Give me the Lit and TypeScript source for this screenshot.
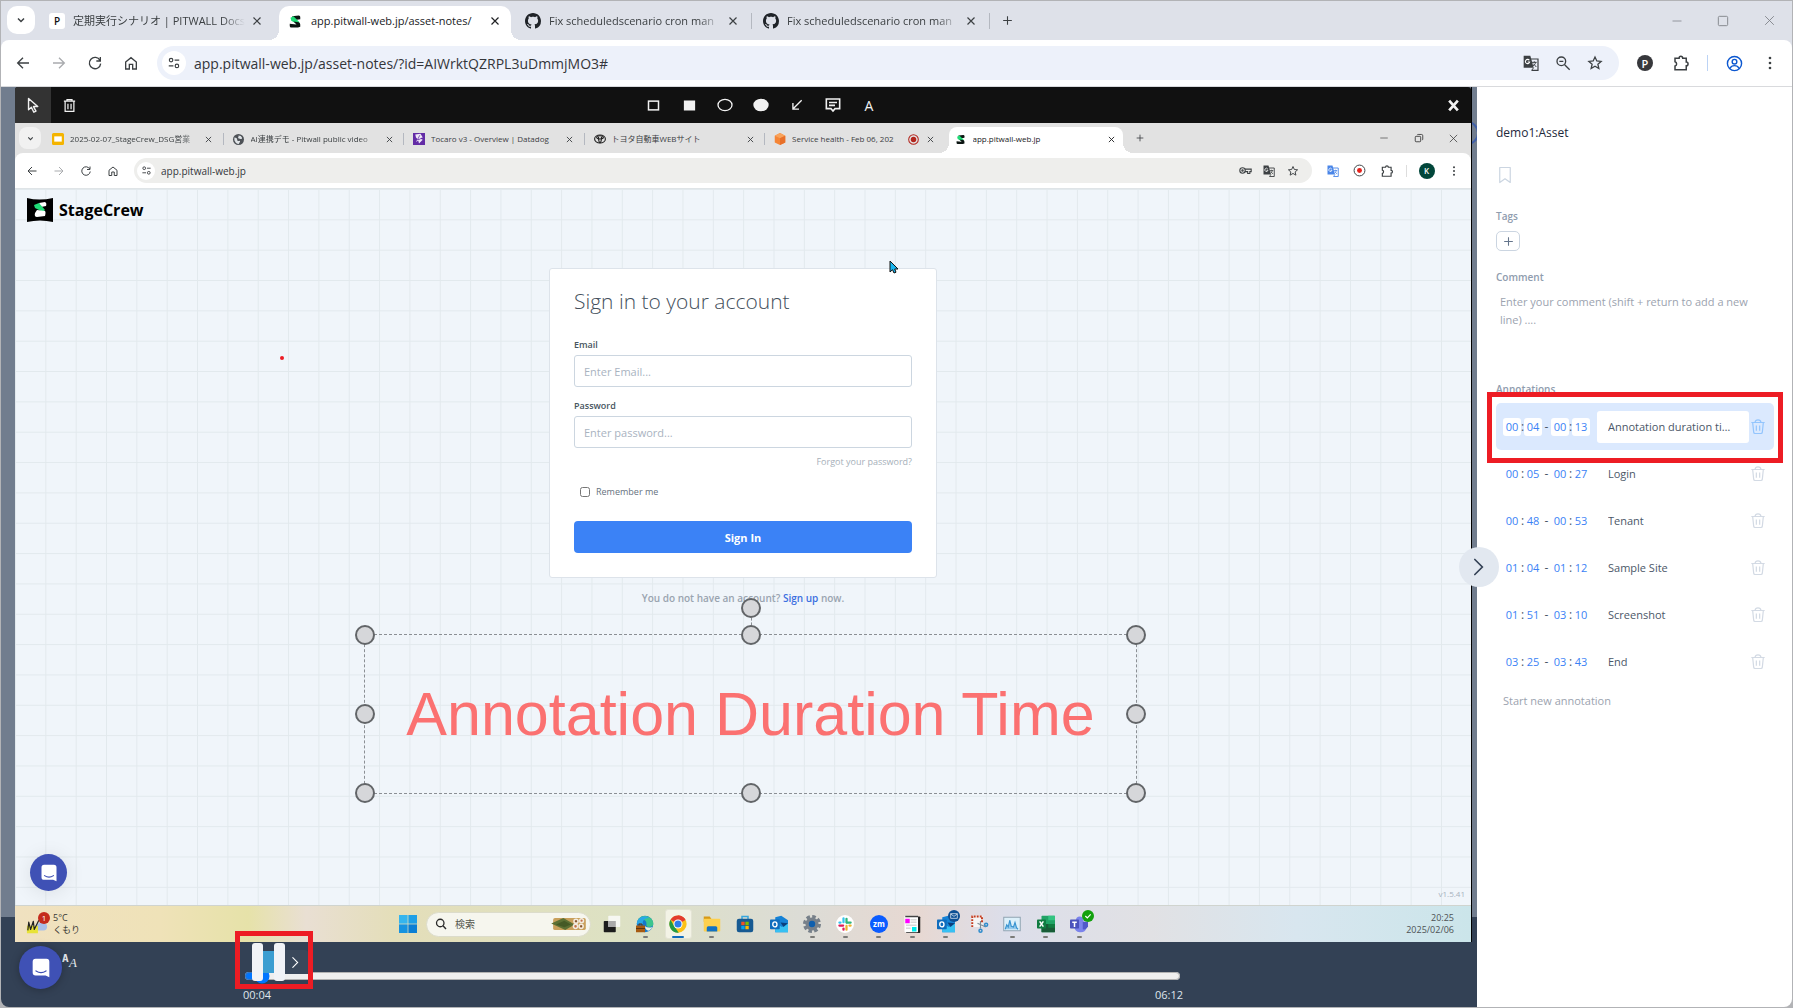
import { LitElement, html, svg, css, nothing, type TemplateResult, type SVGTemplateResult } from "lit";
import { customElement, property, state } from "lit/decorators.js";
import { classMap } from "lit/directives/class-map.js";

const icon = (size: number, body: SVGTemplateResult, box = "0 0 24 24", h = size) =>
  html`<svg width=${size} height=${h} viewBox=${box} fill="none" stroke="currentColor" stroke-width="2" aria-hidden="true">${body}</svg>`;

const g = {
  chevronDown: svg`<path d="M6 9l6 6 6-6" stroke-width="3"/>`,
  chevronRight: svg`<path d="M7 3l9 9-9 9" stroke-linecap="round"/>`,
  close: svg`<path d="M5 5l14 14M19 5L5 19" stroke-width="2.400"/>`,
  plus: svg`<path d="M12 4v16M4 12h16"/>`,
  back: svg`<path d="M21 12H4M12 4l-8 8 8 8"/>`,
  forward: svg`<path d="M3 12h17M12 4l8 8-8 8"/>`,
  reload: svg`<path d="M19.5 8A8.5 8.500 0 1 0 20.500 13M20 3v6h-6"/>`,
  home: svg`<path d="M4 10.500L12 4l8 6.500V21h-5.500v-7h-5v7H4z"/>`,
  tune: svg`<circle cx="7" cy="7" r="3"/><path d="M13 7h8M3 17h8"/><circle cx="17" cy="17" r="3"/>`,
  star: svg`<path d="M12 3l2.700 6 6.500.600-4.900 4.300 1.500 6.400L12 16.900l-5.800 3.400 1.500-6.400L2.800 9.600l6.500-.600z" stroke-width="1.900"/>`,
  puzzle: svg`<path d="M4 5.500h5.500a2.400 2.400 0 0 1 4.800 0H19v5.300a2.400 2.400 0 0 1 0 4.800V21H4v-5a2.900 2.900 0 0 0 0-5.600z"/>`,
  dots: svg`<g fill="currentColor" stroke="none"><circle cx="12" cy="4.500" r="2"/><circle cx="12" cy="12" r="2"/><circle cx="12" cy="19.500" r="2"/></g>`,
  translate: svg`<path d="M11 6h11.500v17H13" stroke-width="1.800"/><path d="M1 1h10l5 18H1z" fill="currentColor" stroke="none"/><path d="M9.500 8a3.200 3.200 0 1 0 .400 2.600H7" stroke="#fff" stroke-width="1.600"/><path d="M13.500 11h7M17 9.500V11M19 11c-.500 2.500-2 4-3.800 5.200M15.500 13l4.500 5M13 23l3-4" stroke-width="1.500"/>`,
  zoomOut: svg`<circle cx="9.500" cy="9.500" r="6.500"/><path d="M14.500 14.500L22 22M6.500 9.500h6"/>`,
  profile: svg`<circle cx="12" cy="12" r="10"/><circle cx="12" cy="9.500" r="3.300"/><path d="M5.500 19c1.500-3 4-4 6.500-4s5 1 6.500 4"/>`,
  key: svg`<circle cx="6.500" cy="12" r="5"/><circle cx="6.500" cy="12" r="1.300"/><path d="M11 9.500h11.500v4.500h-2.500v3.500h-4V14h-5"/>`,
  minus: svg`<path d="M3 12h18" stroke-width="1.500"/>`,
  maximize: svg`<rect x="4" y="4" width="16" height="16" rx="2" stroke-width="1.500"/>`,
  restore: svg`<rect x="3" y="8" width="13" height="13" rx="2"/><path d="M8 5q0-1.500 2-1.500h8q3 0 3 3V15q0 1.500-2 1.500"/>`,
  closeThin: svg`<path d="M4 4l16 16M20 4L4 20" stroke-width="1.600"/>`,
  pointer: svg`<path d="M5 2v16l4-3.500 3.500 7 3-1.500L12 13.500h6z" stroke-linejoin="round"/>`,
  trashSolid: svg`<path d="M3 5h18M8 4V2.500h8V4M5 5v16.500h14V5M9.500 9v9M14.500 9v9"/>`,
  rect: svg`<rect x="4" y="5" width="16" height="14" stroke-width="2.400"/>`,
  rectFill: svg`<rect x="3" y="4" width="18" height="16" fill="currentColor" stroke="none"/>`,
  circle: svg`<ellipse cx="12" cy="12" rx="10.500" ry="8.500"/>`,
  circleFill: svg`<ellipse cx="12" cy="12" rx="11.500" ry="9.500" fill="currentColor" stroke="none"/>`,
  arrow: svg`<path d="M20 4L5 19M5 8.500V19h10.500" stroke-width="2.300"/>`,
  comment: svg`<path d="M2 3h20v14.500h-7L12 21l-3-3.500H2zM6 8.200h12M6 12.500h9" stroke-width="2.400"/>`,
  trash: svg`<path d="M2 6h20M7.500 6q.500-4 4.500-4t4.500 4M4 6l1.500 14.500q.200 2 2 2h9q1.800 0 2-2L20 6M9.500 10.500v8M14.500 10.500v8" stroke-width="1.800"/>`,
  bookmark: svg`<path d="M5 2h14v20l-7-5-7 5z" stroke-width="1.600" stroke-linejoin="round"/>`,
  search: svg`<circle cx="10.500" cy="10" r="7.500" stroke-width="2.600"/><path d="M16 15.500l6 6.500" stroke-width="2.800"/>`,
  bubble: svg`<path d="M5.500 1h13Q22 1 22 4.500V23l-4.500-2h-12Q2 21 2 17.500v-13Q2 1 5.500 1z" fill="#fff" stroke="none"/><path d="M6 15.500q6 4 12 0" stroke="#3f51b5" stroke-width="1.500" stroke-linecap="round"/>`,
};

const github = svg`<path fill="#1f2328" stroke="none" d="M8 0C3.580 0 0 3.580 0 8c0 3.540 2.290 6.530 5.470 7.590.4.070.550-.170.550-.380 0-.190-.010-.820-.010-1.490-2.010.370-2.530-.490-2.690-.940-.090-.230-.480-.940-.820-1.130-.280-.150-.680-.520-.010-.530.630-.010 1.080.580 1.230.820.720 1.210 1.870.870 2.330.660.070-.520.280-.870.510-1.070-1.780-.2-3.640-.890-3.640-3.950 0-.870.310-1.590.820-2.150-.080-.2-.360-1.020.080-2.120 0 0 .670-.210 2.200.820.640-.180 1.320-.270 2-.270s1.360.090 2 .270c1.530-1.040 2.200-.820 2.200-.820.440 1.100.160 1.920.080 2.120.510.560.820 1.270.820 2.150 0 3.070-1.870 3.750-3.650 3.950.290.250.540.730.540 1.480 0 1.070-.010 1.930-.010 2.200 0 .210.150.460.550.380A8.010 8.010 0 0 0 16 8c0-4.420-3.580-8-8-8z"/>`;

const sMark = svg`<g stroke="none"><path d="M4 1l9-1q2 0 2 2v3L8 6z" fill="#0c1512"/><path d="M2 3l4-2 8 8-2 3-9-5z" fill="#1fdc76"/><path d="M6 8l7 1q2 1 2 3v3l-3 1H3q-2 0-2-2v-3l9 1z" fill="#0c1512"/></g>`;

const fav = {
  slides: svg`<rect width="16" height="16" rx="2" fill="#f4b400" stroke="none"/><rect x="3" y="4.500" width="10" height="7" fill="#fff" stroke="none"/>`,
  globe: svg`<circle cx="8" cy="8" r="8" fill="#4d5156" stroke="none"/><path d="M2 5q4 0 4 3t3 2-1 5q-5-2-6-6zM8 2q4 0 5 3t-3 2-2-3z" fill="#dfe3e6" stroke="none"/>`,
  datadog: svg`<rect width="16" height="16" fill="#632ca6" stroke="none"/><path d="M3 2l7-1 3 5-4 1 4 2-5 5-1-4-3 2 2-4-2-2z" fill="#efe7f8" stroke="none"/><path d="M9 3l-3 6 4-1" stroke="#632ca6" stroke-width="1"/>`,
  toyota: svg`<g stroke="#222" stroke-width="1.500"><ellipse cx="8" cy="8" rx="7.200" ry="5.400"/><ellipse cx="8" cy="5.800" rx="4.500" ry="2.200"/><path d="M6 5q0 7 2 8 2-1 2-8"/></g>`,
  cube: svg`<g stroke="none"><path d="M8 0l7 3.500v9L8 16l-7-3.500v-9z" fill="#f58536"/><path d="M8 0l7 3.500L8 7 1 3.500z" fill="#f9a35b"/><path d="M8 7l7-3.500v9L8 16z" fill="#e8702a"/></g>`,
  record: svg`<circle cx="8" cy="8" r="7" stroke="#b3261e" stroke-width="1.500"/><circle cx="8" cy="8" r="4" fill="#b3261e" stroke="none"/>`,
};

const app = {
  windows: svg`<g stroke="none" fill="#1490df"><path d="M0 0h11.500v11.500H0z" fill="#35b5ee"/><path d="M12.500 0H24v11.500H12.500z" fill="#1e9fe6"/><path d="M0 12.500h11.500V24H0z" fill="#1793e0"/><path d="M12.500 12.500H24V24H12.500z" fill="#0b7ed4"/></g>`,
  task: svg`<g stroke="none"><rect x="1" y="8" width="16" height="15" rx="1" fill="#1c1c1c"/><rect x="7" y="1" width="16" height="15" rx="1" fill="#fafafa" opacity=".85"/><rect x="7" y="8" width="10" height="8" fill="#a9a9a9"/></g>`,
  edge: svg`<g stroke="none"><circle cx="12" cy="12" r="11" fill="#1577c9"/><path d="M2 8C5-1 20-1 23 10q1 6-6 6-4 0-3-4 0-6-6-6-4 0-6 2z" fill="#3cc58d"/><path d="M1 12C2 2 13 0 17 4q-9 0-8 9-5-3-8-1z" fill="#28a7e8"/><path d="M17 21q-5-1-5-6 4 3 10 1-2 4-5 5z" fill="#e9f0e0"/><rect x="0" y="14" width="12" height="9" fill="#a65a12"/><path d="M4 14v-2h4v2M0 18h12" stroke="#5f3209" stroke-width="1.300" fill="none"/></g>`,
  chrome: svg`<g stroke="none"><circle cx="12" cy="12" r="11.500" fill="#fbc116"/><path d="M12 12L2 6.300A11.500 11.500 0 0 1 22 6.500z" fill="#e33b2e"/><path d="M12 .500A11.500 11.500 0 0 1 22 6.500H12z" fill="#e33b2e"/><path d="M2 6.300l5.200 9 5.800 8.200A11.500 11.500 0 0 1 2 6.300z" fill="#229a45"/><circle cx="12" cy="12" r="6" fill="#fff"/><circle cx="12" cy="12" r="4.700" fill="#2f7de9"/></g>`,
  folder: svg`<g stroke="none"><path d="M1 2h8l2 3v4H1z" fill="#d79a17"/><rect x="1" y="5" width="22" height="17" rx="1" fill="#fdd04e"/><path d="M5 17q0-2 2-2h10q2 0 2 2v5H5z" fill="#1172c4"/></g>`,
  store: svg`<path d="M8 6V2h8v4" stroke="#36a6de" stroke-width="2"/><g stroke="none"><rect x="1" y="5" width="22" height="18" rx="3" fill="#175a92"/><path d="M7 9h4.500v4.500H7z" fill="#f25022"/><path d="M12.500 9H17v4.500h-4.500z" fill="#7fba00"/><path d="M7 14.500h4.500V19H7z" fill="#00a4ef"/><path d="M12.500 14.500H17V19h-4.500z" fill="#ffb900"/></g>`,
  outlook: svg`<g stroke="none"><path d="M7 3l8-2 9 6v16H7z" fill="#1582d6"/><path d="M7 11l9 5 8-5v12H7z" fill="#37c0f2"/><path d="M14 10l10 1-6 5z" fill="#0b3f7d"/><rect x="0" y="6" width="13" height="13" rx="1" fill="#0f6cbd"/></g><ellipse cx="6.500" cy="12.500" rx="2.800" ry="3.300" stroke="#fff" stroke-width="1.800"/>`,
  gear: svg`<circle cx="12" cy="12" r="10" stroke="#77808a" stroke-width="4" stroke-dasharray="4.800 3.050"/><circle cx="12" cy="12" r="6.500" fill="#0f5fae" stroke="#77808a" stroke-width="4.500"/>`,
  slack: svg`<circle cx="12" cy="12" r="12" fill="#fff" stroke="none"/><g stroke-width="3" stroke-linecap="round"><path d="M10 4.500v5" stroke="#36c5f0"/><path d="M4.500 10H6" stroke="#36c5f0"/><path d="M14.500 10h5" stroke="#2eb67d"/><path d="M14 5v5" stroke="#2eb67d"/><path d="M14 14.500v5" stroke="#ecb22e"/><path d="M18 14h1.500" stroke="#ecb22e"/><path d="M4.500 14h5" stroke="#e01e5a"/><path d="M10 18v1.500" stroke="#e01e5a"/></g>`,
  zoom: svg`<circle cx="12" cy="12" r="12" fill="#0b5cff" stroke="none"/>`,
  note: svg`<g stroke="none"><rect x="4" y="2" width="19" height="22" rx="1" fill="#222"/><rect x="2" y="1" width="18" height="22" rx="1" fill="#fff"/><path d="M3 1h17v2H3z" fill="#444"/><path d="M3 5h6v6H3z" fill="#f0f"/><path d="M12 16h6v6h-6z" fill="#0ee"/><path d="M10 6h8v1h-8zM10 9h8v1h-8zM4 13h14v1H4zM4 17h6v1H4z" fill="#b5b5b5"/></g>`,
  snip: svg`<rect x="2" y="1" width="15" height="15" fill="#f5f5f5" stroke="none"/><path d="M3 16V2h13v8" stroke="#c43b1e" stroke-width="2.600" stroke-dasharray="2.500 1.500"/><path d="M10 11l11 5M14 8v10" stroke="#7f8c96" stroke-width="1.600"/><circle cx="14" cy="21" r="2" stroke="#2f8ccc"/><circle cx="21.500" cy="13" r="2" stroke="#2f8ccc"/>`,
  chart: svg`<rect x="1" y="3" width="22" height="18" fill="#dcf0fa" stroke="#8fa3b1" stroke-width="1.300"/><path d="M3 19l2-6 2 3 2-9 2 8 3 1 2-6 2 7 2 2" stroke="#3793d0" stroke-width="1.500" fill="#93c9ec"/>`,
  excel: svg`<g stroke="none"><rect x="6" y="1" width="18" height="22" rx="1" fill="#21a366"/><path d="M15 1h9v6h-9z" fill="#33c481"/><path d="M6 12h18v11H6z" fill="#185c37"/><path d="M15 12h9v5h-9z" fill="#107c41"/><rect x="0" y="6" width="12" height="12" rx="1" fill="#107c41"/></g><path d="M3.500 8.500l5 7M8.500 8.500l-5 7" stroke="#fff"/>`,
  teams: svg`<g stroke="none"><circle cx="13" cy="7" r="5" fill="#7b83eb"/><path d="M6 9h16v8q-2 7-9 6t-7-7z" fill="#7b83eb"/><path d="M17 9h7v6q-2 5-7 4z" fill="#5059c9"/><rect x="0" y="6" width="12" height="12" rx="1" fill="#4b53bc"/></g><path d="M3 9.500h6M6 9.500V16" stroke="#fff"/>`,
  sushi: svg`<g stroke="none"><rect x="2" y="1" width="35" height="13" rx="2" fill="#c9a05c"/><path d="M0 7L13 1l12 7-10 6z" fill="#5c7034"/><path d="M5 8l9-4 7 4-7 3z" fill="#455a26"/></g><g fill="#c4704a" stroke="#f2ece0" stroke-width="1.600"><circle cx="26.500" cy="4.500" r="2.200"/><circle cx="32.500" cy="4" r="2"/><circle cx="26" cy="10" r="2.200"/><circle cx="32" cy="10" r="2.200"/></g><g fill="#46562c" stroke="none"><circle cx="26.500" cy="4.500" r=".800"/><circle cx="32" cy="10" r=".800"/></g>`,
  weather: svg`<g stroke="none"><path d="M10 17q-3-5 3-7 3-4 6-1 4 0 4 4 0 4-4 4z" fill="#a9bfe8"/><path d="M1 12h12v8H1z" fill="#e8e337"/></g><path d="M2 17l1-9 2 8 3-9 1 9 5-10" stroke="#222" stroke-width="1.300" stroke-linejoin="round"/>`,
};

interface TabInfo { label: string; mark: TemplateResult; active?: boolean; rec?: boolean; ruled?: boolean; faded?: boolean; }

const sharedText = css`
  :host { box-sizing: border-box; }
  *, *::before, *::after { box-sizing: border-box; }
  button, input, textarea { font: inherit; color: inherit; margin: 0; padding: 0; border: 0; background: none; }
  button { display: flex; align-items: center; justify-content: center; }
  svg { display: block; flex: none; overflow: visible; }
`;

/** Tab strip and address row of a browser window. `compact` is the smaller, recorded window. */
@customElement("browser-chrome")
export class BrowserChrome extends LitElement {
  @property({ type: Boolean, reflect: true }) compact = false;
  @property() url = "";
  @property({ attribute: false }) tabs: TabInfo[] = [];

  static styles = [sharedText, css`
    :host {
      display: block;
      --strip: #dee1e9; --field: #edf1fa; --strip-h: 39px; --row-h: 46px; --field-h: 34px;
      --tabs-w: 952px; --tab-pad: 11px; --tab-gap: 8px; --fav: 16px; --lead: 37px; --nav: 36px; --btn: 28px;
      --tab-font: 11px; --url-font: 14px; --end: 36px; --inner-btn: 32px; --win: 46px; --site: 24px; --tab-top: 5px; --close: 16px; --r: 10px;
      color: #3c4043;
    }
    :host([compact]) {
      --strip: #e2e2e2; --field: #eeeeec; --strip-h: 30px; --row-h: 35px; --field-h: 25px;
      --tabs-w: 1083px; --tab-pad: 9px; --tab-gap: 6px; --fav: 12px; --lead: 28px; --nav: 27px; --btn: 22px;
      --tab-font: 8px; --url-font: 10px; --end: 27px; --inner-btn: 24px; --win: 35px; --site: 18px; --tab-top: 4px; --close: 12px; --r: 8px;
    }
    .strip { display: flex; height: var(--strip-h); background: var(--strip); padding-top: var(--tab-top); }
    .lead { width: var(--lead); display: flex; justify-content: flex-end; padding-right: 3px; }
    :host([compact]) .lead { padding-right: 2px; }
    .menu { width: var(--btn); height: var(--btn); border-radius: var(--r); background: #fff; }
    :host([compact]) .menu { background: #f1f1f1; }
    .tabs { display: grid; grid-auto-flow: column; grid-auto-columns: minmax(0, 1fr); flex: 0 1 var(--tabs-w); }
    .tab { position: relative; display: flex; align-items: center; gap: var(--tab-gap); padding: 0 var(--tab-pad) 4px; min-width: 0; }
    :host([compact]) .tab { padding-bottom: 2px; }
    .tab.active { background: #fff; border-radius: var(--r) var(--r) 0 0; margin: 0 3px; padding-left: calc(var(--tab-pad) - 3px); padding-right: calc(var(--tab-pad) - 3px); color: #202124; }
    .tab.active::before, .tab.active::after { content: ""; position: absolute; bottom: 0; width: 10px; height: 10px; }
    .tab.active::before { right: 100%; background: radial-gradient(circle at 0 0, transparent 10px, #fff 10px); }
    .tab.active::after { left: 100%; background: radial-gradient(circle at 100% 0, transparent 10px, #fff 10px); }
    .tab.ruled::after { content: ""; position: absolute; right: 0; top: 7px; width: 1px; height: 16px; background: #b4b8c0; }
    :host([compact]) .tab.ruled::after { top: 6px; height: 12px; }
    .mark { width: var(--fav); display: flex; justify-content: center; }
    .label { flex: 1; min-width: 0; overflow: hidden; white-space: nowrap; font-size: var(--tab-font); line-height: 16px; }
    .label.faded { margin-right: -6px; mask-image: linear-gradient(to right, #000 calc(100% - 24px), transparent calc(100% - 2px)); }
    .shut { width: var(--close); height: var(--close); }
    .add { width: calc(var(--btn) + 6px); height: var(--btn); }
    .window { display: flex; margin-left: auto; color: #7c7f85; margin-top: calc(0px - var(--tab-top)); }
    :host([compact]) .window { color: #333; }
    .window button { width: var(--win); height: var(--strip-h); }
    .row { display: flex; height: var(--row-h); background: var(--strip); }
    .row-in { display: flex; flex: 1; align-items: center; background: #fff; border-radius: 8px 8px 0 0; padding: 0 4px; }
    :host([compact]) .row-in { padding-left: 3px; }
    .nav, .tools { display: flex; align-items: center; }
    .nav { margin-right: 8px; }
    .nav button { width: var(--nav); height: var(--field-h); }
    .dim { color: #a9abae; }
    .field { flex: 1; display: flex; align-items: center; height: var(--field-h); border-radius: 17px; background: var(--field); padding: 0 8px 0 5px; }
    :host([compact]) .field { padding: 0 7px 0 3px; }
    .field button { width: var(--inner-btn); height: var(--site); }
    .field .site { width: var(--site); border-radius: 50%; background: #fff; }
    .field input { flex: 1; min-width: 0; font-size: var(--url-font); padding-left: 8px; outline: none; color: #34363a; }
    :host([compact]) .field input { padding-left: 6px; }
    .tools { padding-left: 8px; }
    :host([compact]) .tools { padding-left: 7px; }
    .tools button { width: var(--end); height: var(--btn); }
    .rule { width: 1px; height: 16px; margin: 0 8px; background: #bcd3f5; }
    :host([compact]) .rule { margin: 0 6px; height: 12px; background: #ddd; }
    .letter, .pbadge, .kbadge { display: grid; place-items: center; width: 16px; height: 16px; line-height: 1; font-weight: 600; }
    .letter { border-radius: 3px; background: #fff; color: #111; font-size: 10px; }
    .pbadge, .kbadge { border-radius: 50%; color: #fff; }
    .pbadge { background: #37383c; font-size: 11px; }
    .kbadge { background: #01463a; font-size: 8px; }
    .blue { color: #0b57d0; }
    .gblue { color: #4a86e8; }
  `];

  render() {
    const c = this.compact;
    const s = c ? 12 : 16;
    return html`
      <div class="strip">
        <div class="lead"><button class="menu" aria-label="Search tabs">${icon(c ? 9 : 12, g.chevronDown)}</button></div>
        <div class="tabs" role="tablist">
          ${this.tabs.map((t) => html`
            <div class=${classMap({ tab: true, active: !!t.active, ruled: !!t.ruled })} role="tab" aria-selected=${t.active ? "true" : "false"}>
              <span class="mark">${t.mark}</span>
              <span class=${classMap({ label: true, faded: !!t.faded })}>${t.label}</span>
              ${t.rec ? icon(11, fav.record, "0 0 16 16") : nothing}
              <button class="shut" aria-label="Close tab">${icon(c ? 9 : 12, g.close)}</button>
            </div>`)}
        </div>
        <button class="add" aria-label="New tab">${icon(c ? 10 : 13, g.plus)}</button>
        <div class="window">
          <button aria-label="Minimize">${icon(c ? 10 : 12, g.minus)}</button>
          <button aria-label="Maximize">${icon(c ? 10 : 14, c ? g.restore : g.maximize)}</button>
          <button aria-label="Close window">${icon(c ? 11 : 13, g.closeThin)}</button>
        </div>
      </div>
      <div class="row"><div class="row-in">
        <div class="nav">
          <button aria-label="Back">${icon(s, g.back)}</button>
          <button aria-label="Forward" class="dim">${icon(s, g.forward)}</button>
          <button aria-label="Reload">${icon(s, g.reload)}</button>
          <button aria-label="Home">${icon(s, g.home)}</button>
        </div>
        <div class="field">
          <button class="site" aria-label="Site information">${icon(c ? 11 : 14, g.tune)}</button>
          <input type="text" aria-label="Address" .value=${this.url} />
          ${c ? html`<button aria-label="Passwords">${icon(13, g.key)}</button>` : nothing}
          <button aria-label="Translate">${icon(s, g.translate)}</button>
          ${c ? nothing : html`<button aria-label="Zoom">${icon(16, g.zoomOut)}</button>`}
          <button aria-label="Bookmark">${icon(s, g.star)}</button>
        </div>
        <div class="tools">
          ${c
            ? html`<button class="gblue" aria-label="Translator">${icon(12, g.translate)}</button>
                <button aria-label="Recorder">${icon(13, svg`<circle cx="12" cy="12" r="10" stroke-width="1.800"/><circle cx="12" cy="12" r="4.500" fill="#e5221c" stroke="none"/>`)}</button>`
            : html`<button aria-label="PITWALL"><span class="pbadge">P</span></button>`}
          <button aria-label="Extensions">${icon(c ? 14 : 18, g.puzzle)}</button>
          <span class="rule"></span>
          <button class="blue" aria-label="Profile">${c ? html`<span class="kbadge">K</span>` : icon(17, g.profile)}</button>
          <button aria-label="Menu">${icon(c ? 12 : 16, g.dots)}</button>
        </div>
      </div></div>
    `;
  }
}

/** White square with one letter, used where a site has no drawn icon. */
@customElement("letter-mark")
export class LetterMark extends LitElement {
  @property() letter = "";
  static styles = css`
    :host { display: grid; place-items: center; width: 16px; height: 16px; border-radius: 3px; background: #fff; color: #111; font-size: 10px; line-height: 1; font-weight: 600; }
  `;
  render() { return html`${this.letter}`; }
}

interface Note { from: [string, string]; to: [string, string]; title: string; selected?: boolean; }

@customElement("asset-panel")
export class AssetPanel extends LitElement {
  @state() private notes: Note[] = [
    { from: ["00", "04"], to: ["00", "13"], title: "Annotation duration time", selected: true },
    { from: ["00", "05"], to: ["00", "27"], title: "Login" },
    { from: ["00", "48"], to: ["00", "53"], title: "Tenant" },
    { from: ["01", "04"], to: ["01", "12"], title: "Sample Site" },
    { from: ["01", "51"], to: ["03", "10"], title: "Screenshot" },
    { from: ["03", "25"], to: ["03", "43"], title: "End" },
  ];

  static styles = [sharedText, css`
    :host { display: block; position: relative; background: #fff; padding: 36px 18px 0 19px; color: #4b5768; font-size: 12px; }
    h1 { margin: 0; font-size: 12px; line-height: 20px; font-weight: 500; color: #1e293b; }
    .mark { width: 18px; height: 20px; margin-top: 22px; color: #cbd5e1; }
    .caption { display: block; font-size: 10px; line-height: 16px; color: #8f9cae; font-weight: 600; }
    .tags { margin-top: 23px; }
    .plus { width: 24px; height: 20px; margin-top: 7px; border: 1px solid #cbd5e1; border-radius: 5px; color: #64748b; }
    .comment { margin-top: 18px; }
    textarea { display: block; width: 100%; height: 72px; margin-top: 8px; padding: 0 4px; resize: none; overflow: hidden; outline: none; font-size: 11px; line-height: 18px; }
    textarea::placeholder { color: #9ca3af; opacity: 1; }
    .notes-title { margin-top: 16px; }
    ul { list-style: none; margin: 6px 0 0; padding: 0; }
    li { position: relative; display: flex; align-items: center; height: 47px; border-radius: 5px; padding: 0 7px; }
    li.selected { background: #dbe9fe; }
    .part { width: 18px; height: 18px; border-radius: 3px; text-align: center; color: #3b82f6; font-size: 11px; outline: none; }
    .sep { width: 3px; display: flex; justify-content: center; }
    .dash { width: 9px; text-align: center; }
    .name { flex: 1; min-width: 0; height: 32px; margin-left: 7px; padding: 0 11px; border-radius: 3px; text-overflow: ellipsis; outline: none; font-size: 11px; }
    .selected .part, .selected .name { background: #fff; }
    .bin { width: 18px; height: 24px; color: #d3dae4; }
    .selected .bin { color: #93c5fd; }
    .frame { position: absolute; inset: -11px -9px -13px; border: 5px solid #ed1c24; pointer-events: none; z-index: 1; }
    .start { margin: 6px 0 0 7px; font-size: 11px; line-height: 20px; color: #9ca3af; }
    .fold { position: absolute; left: -18px; top: 460px; width: 40px; height: 40px; border-radius: 50%; background: #e2e8f0; color: #334155; }
  `];

  render() {
    return html`
      <h1>demo1:Asset</h1>
      <button class="mark" aria-label="Bookmark">${icon(18, g.bookmark)}</button>
      <span class="caption tags">Tags</span>
      <button class="plus" aria-label="Add tag">${icon(13, g.plus)}</button>
      <label class="caption comment" for="comment">Comment</label>
      <textarea id="comment" placeholder="Enter your comment (shift + return to add a new line) ...."></textarea>
      <span class="caption notes-title">Annotations</span>
      <ul>
        ${this.notes.map((n) => html`
          <li class=${classMap({ selected: !!n.selected })}>
            <input class="part" aria-label="Start minutes" .value=${n.from[0]} /><span class="sep">:</span>
            <input class="part" aria-label="Start seconds" .value=${n.from[1]} /><span class="dash">-</span>
            <input class="part" aria-label="End minutes" .value=${n.to[0]} /><span class="sep">:</span>
            <input class="part" aria-label="End seconds" .value=${n.to[1]} />
            <input class="name" aria-label="Annotation title" .value=${n.title} />
            <button class="bin" aria-label="Delete annotation">${icon(16, g.trash, "0 0 24 24", 17)}</button>
            ${n.selected ? html`<span class="frame"></span>` : nothing}
          </li>`)}
      </ul>
      <button class="start">Start new annotation</button>
      <button class="fold" aria-label="Collapse panel">${icon(20, g.chevronRight)}</button>
    `;
  }
}

@customElement("sign-in-page")
export class SignInPage extends LitElement {
  static styles = [sharedText, css`
    :host { display: flex; flex-direction: column; align-items: center; position: relative; background: #f0f5fa; overflow: hidden; }
    .grid { position: absolute; inset: 0; width: 100%; height: 100%; }
    .brand { position: relative; align-self: flex-start; display: flex; align-items: center; gap: 6px; margin: 9px 0 0 12px; height: 24px; }
    .brand span { font-size: 16px; font-weight: 700; color: #000; }
    form { position: relative; width: 388px; margin-top: 46px; padding: 20px 24px 24px; background: #fff; border: 1px solid #dde3ea; border-radius: 3px; color: #475560; }
    h2 { margin: 0; font-size: 21px; line-height: 24px; font-weight: 300; color: #44505c; }
    .text { display: block; font-size: 9px; line-height: 14px; font-weight: 600; margin-bottom: 3px; }
    .box { display: block; width: 100%; height: 32px; border: 1px solid #ccd6e0; border-radius: 3px; padding: 0 9px; font-size: 11px; outline: none; }
    .box::placeholder { color: #a9b3bf; opacity: 1; }
    .email { margin-top: 25px; }
    .password { margin-top: 12px; }
    .forgot { display: block; text-align: right; margin-top: 6px; font-size: 9px; line-height: 16px; color: #a6afb9; text-decoration: none; }
    .remember { display: flex; align-items: center; gap: 6px; margin: 14px 0 0 6px; font-size: 9px; line-height: 16px; color: #66727e; }
    .remember input { width: 10px; height: 10px; }
    .go { width: 100%; height: 32px; margin-top: 21px; border-radius: 4px; background: #3b82f6; color: #fff; font-size: 11px; font-weight: 700; }
    p { position: relative; margin: 12px 0 0; font-size: 10px; line-height: 16px; font-weight: 600; color: #9aa4b0; }
    p a { color: #3b6fe0; text-decoration: none; }
    .version { position: absolute; right: 6px; bottom: 4px; font-size: 8px; line-height: 14px; color: #a7b1be; }
    .help { position: absolute; left: 15px; bottom: 14px; width: 37px; height: 37px; border-radius: 50%; background: #3f51b5; box-shadow: 0 2px 20px #00000018; }
    .dot { position: absolute; left: 265px; top: 167px; width: 4px; height: 4px; border-radius: 50%; background: #ed1c24; }
    .mouse { position: absolute; left: 874px; top: 71px; }
    .pick { position: absolute; left: 349px; top: 445px; width: 773px; height: 160px; display: grid; place-items: center; border: 1px dashed #8b8f94; font: 61px/72px "Liberation Sans", Arial, sans-serif; color: #fb7171; white-space: nowrap; }
    .stem { position: absolute; left: 50%; top: -27px; height: 27px; border-left: 1px dashed #8b8f94; }
    .h { position: absolute; width: 20px; height: 20px; margin: -10px; border-radius: 50%; border: 2px solid #626568; background: #d6d7da; }
    .l { left: 0; } .c { left: 50%; } .r { left: 100%; }
    .t { top: 0; } .m { top: 50%; } .b { top: 100%; } .u { top: -27px; }
  `];

  render() {
    return html`
      <svg class="grid" aria-hidden="true">
        <defs><pattern id="cells" width="30.340" height="30.340" patternUnits="userSpaceOnUse"><path d="M.500 30.340V.500H30.340" fill="none" stroke="#e2e9ed" stroke-width="1"/></pattern></defs>
        <rect width="100%" height="100%" fill="url(#cells)"/>
      </svg>
      <div class="brand">
        ${icon(26, svg`<path d="M0 0q12 3 26 0v24q-13-3-26 0z" fill="#000" stroke="none"/><g stroke="none"><path d="M12 5l6-1q2 1 1 4l-5 1z" fill="#fff"/><path d="M7 7l5-2 6 7-2 2-8-4z" fill="#1fdc76"/><path d="M10 12l8 1q1 1 0 5l-8 1q-3 0-2-4z" fill="#fff"/></g>`, "0 0 26 24", 24)}
        <span>StageCrew</span>
      </div>
      <form @submit=${(e: Event) => e.preventDefault()}>
        <h2>Sign in to your account</h2>
        <label class="text email" for="email">Email</label>
        <input class="box" id="email" type="email" placeholder="Enter Email..." />
        <label class="text password" for="password">Password</label>
        <input class="box" id="password" type="password" placeholder="Enter password..." />
        <a class="forgot" href="#forgot">Forgot your password?</a>
        <label class="remember"><input type="checkbox" />Remember me</label>
        <button class="go">Sign In</button>
      </form>
      <p>You do not have an account? <a href="#signup">Sign up</a> now.</p>
      <span class="version">v1.5.41</span>
      <button class="help" aria-label="Open chat">${icon(18, g.bubble)}</button>
      <span class="dot"></span>
      <svg class="mouse" width="10" height="14" viewBox="0 0 10 14" aria-hidden="true"><path d="M1 1v11l2.500-2.300L5 13l2-.800L5.700 9H9z" fill="#18b6f0" stroke="#111" stroke-width="1"/></svg>
      <div class="pick">Annotation Duration Time
        <span class="stem"></span>
        ${["l t", "c t", "r t", "l m", "r m", "l b", "c b", "r b", "c u"].map((p) => html`<span class="h ${p}"></span>`)}
      </div>
    `;
  }
}

@customElement("task-bar")
export class TaskBar extends LitElement {
  static styles = [sharedText, css`
    :host { display: grid; grid-template-columns: 1fr auto 1fr; align-items: center; height: 37px; border-top: 1px solid #d0d4cf;
      background: linear-gradient(to right, #f0e1c0 0, #efe2b8 10%, #e6e2a9 16%, #e9dfd3 20%, #e4deb9 26%, #dde1c3 41%, #dcdcd6 54%, #e7d8d2 62%, #dcdeea 68%, #e1e1e4 78%, #d8e6ef 88%, #cbe5ea 100%); }
    .weather { position: relative; display: flex; align-items: center; gap: 5px; padding-left: 11px; font-size: 9px; line-height: 12px; color: #3b3a35; text-align: left; justify-self: start; }
    .count { position: absolute; left: 23px; top: 0; width: 12px; height: 12px; border-radius: 50%; background: #c42b1c; color: #fff; font-size: 8px; text-align: center; line-height: 12px; }
    .mid { display: flex; align-items: center; height: 36px; }
    .start { width: 36px; height: 36px; }
    .find { display: flex; align-items: center; width: 165px; height: 25px; border-radius: 13px; background: #f6f6ee; border: 1px solid #dcdccb; padding: 0 3px 0 8px; gap: 8px; color: #2b2b2b; }
    .find input { flex: 1; min-width: 0; font-size: 10px; outline: none; }
    .find input::placeholder { color: #55564f; opacity: 1; }
    .apps { display: grid; grid-template-columns: repeat(15, 1fr); width: 501px; height: 36px; margin-left: 4px; }
    .apps button { position: relative; height: 36px; }
    .apps button.on::before { content: ""; position: absolute; inset: 3px 3px; border-radius: 3px; background: #f3f3e6; border: 1px solid #e4e4d5; }
    .apps svg { position: relative; }
    .run::after { content: ""; position: absolute; bottom: 4px; width: 5px; height: 2px; border-radius: 1px; background: #7b7b78; }
    .on.run::after { width: 12px; background: #0f6cbd; }
    .zm { position: absolute; color: #fff; font-size: 8px; font-weight: 700; line-height: 10px; }
    .badge { position: absolute; right: 2px; top: 4px; width: 12px; height: 12px; border-radius: 50%; display: grid; place-items: center; color: #fff; background: #0d4f94; }
    .badge.ok { background: #13a10e; }
    .clock { justify-self: end; text-align: right; padding-right: 17px; font-size: 9px; line-height: 12px; color: #4d5254; }
  `];

  private apps: { name: string; art: SVGTemplateResult; run?: boolean; on?: boolean; extra?: TemplateResult }[] = [
    { name: "Task view", art: app.task },
    { name: "Edge", art: app.edge, run: true },
    { name: "Chrome", art: app.chrome, run: true, on: true },
    { name: "Explorer", art: app.folder, run: true },
    { name: "Store", art: app.store },
    { name: "Outlook", art: app.outlook },
    { name: "Settings", art: app.gear, run: true },
    { name: "Slack", art: app.slack, run: true },
    { name: "Zoom", art: app.zoom, run: true, extra: html`<span class="zm">zm</span>` },
    { name: "Notes", art: app.note, run: true },
    { name: "Mail", art: app.outlook, run: true, extra: html`<span class="badge">${icon(8, svg`<path d="M2 5h20v14H2zM2 6l10 7 10-7"/>`)}</span>` },
    { name: "Snipping Tool", art: app.snip },
    { name: "Monitor", art: app.chart, run: true },
    { name: "Excel", art: app.excel, run: true },
    { name: "Teams", art: app.teams, run: true, extra: html`<span class="badge ok">${icon(8, svg`<path d="M4 12l6 6L20 7" stroke-width="3.500"/>`)}</span>` },
  ];

  render() {
    return html`
      <button class="weather">${icon(22, app.weather, "0 0 24 20", 20)}<span class="count">1</span><span>5°C<br />くもり</span></button>
      <div class="mid">
        <button class="start" aria-label="Start">${icon(18, app.windows)}</button>
        <label class="find">${icon(12, g.search)}<input type="text" aria-label="検索" placeholder="検索" />${icon(36, app.sushi, "0 0 38 15", 14)}</label>
        <div class="apps">
          ${this.apps.map((a) => html`<button class=${classMap({ run: !!a.run, on: !!a.on })} aria-label=${a.name}>${icon(18, a.art)}${a.extra ?? nothing}</button>`)}
        </div>
      </div>
      <div class="clock">20:25<br />2025/02/06</div>
    `;
  }
}

@customElement("app-root")
export class AppRoot extends LitElement {
  @state() private position = 4;
  private readonly duration = 372;

  static styles = [sharedText, css`
    :host { display: flex; flex-direction: column; min-height: 100vh; padding: 1px; background: #b2b3b6; overflow: hidden; font-family: "Open Sans", "Noto Sans", "Noto Sans CJK JP", sans-serif; }
    .work { flex: 1; display: flex; border-top: 1px solid #d9dadd; border-radius: 0 0 8px 8px; overflow: hidden; }
    .main { position: relative; flex: 1; min-width: 0; display: flex; flex-direction: column; background: linear-gradient(to top, #334155 90px, #717d8e 90px); }
    .video { flex: 1; display: flex; flex-direction: column; margin: 0 5px 0 14px; border-right: 1px solid #000; }
    sign-in-page { flex: 1; border-top: 1px solid #dfe4e7; }
    .draw { display: flex; height: 36px; background: #111; color: #f1f1f1; border-radius: 3px 3px 0 0; }
    .draw button { width: 36px; height: 36px; }
    .draw .on { background: #333; border-top-left-radius: 3px; }
    .shapes { flex: 1; display: flex; justify-content: center; }
    .letter { font-size: 14px; }
    .ring { position: absolute; right: 0; top: 34px; width: 5px; height: 24px; overflow: hidden; }
    .ring::before { content: ""; position: absolute; right: -2px; top: 0; width: 24px; height: 24px; border: 2px solid #4160a8; border-radius: 50%; }
    .player { position: relative; height: 65px; padding: 26px 296px 0 243px; color: #dfe5ec; font-size: 11px; }
    .player input { display: block; width: 100%; height: 16px; }
    .times { display: flex; justify-content: space-between; line-height: 16px; margin: 3px -2px 0 -1px; }
    .pause { position: absolute; left: 251px; top: 1px; width: 33px; height: 38px; background: linear-gradient(#3b9dd1, #3b9dd1) center/100% 22px no-repeat; }
    .pause::before, .pause::after { content: ""; position: absolute; top: 0; width: 11px; height: 38px; border-radius: 3px; background: #f1f3f7; }
    .pause::before { left: 0; } .pause::after { right: 0; }
    .next { position: absolute; left: 282px; top: 8px; width: 25px; height: 24px; background: #3a485b; color: #fff; border-radius: 0 3px 0 0; }
    .frame { position: absolute; left: 234px; top: -11px; width: 78px; height: 58px; border: 5px solid #ed1c24; pointer-events: none; }
    .help { position: absolute; left: 18px; top: 4px; width: 43px; height: 43px; border-radius: 50%; background: #3f51b5; box-shadow: 0 1px 8px #0004; }
    .lang { position: absolute; left: 61px; top: 11px; width: 15px; height: 16px; color: #e2e6ec; }
    .lang b, .lang i { position: absolute; }
    .lang b { left: 0; top: 0; font: 700 11px/12px "DejaVu Sans Mono", monospace; }
    .lang i { left: 7px; top: 4px; font: italic 13px/12px "Liberation Serif", serif; }
    asset-panel { width: 315px; }
  `];

  private outerTabs: TabInfo[] = [
    { label: "定期実行シナリオ | PITWALL Docs", mark: html`<letter-mark letter="P"></letter-mark>`, faded: true },
    { label: "app.pitwall-web.jp/asset-notes/", mark: icon(12, sMark, "0 0 16 16", 13), active: true },
    { label: "Fix scheduledscenario cron man", mark: icon(16, github, "0 0 16 16"), ruled: true, faded: true },
    { label: "Fix scheduledscenario cron man", mark: icon(16, github, "0 0 16 16"), ruled: true, faded: true },
  ];

  private innerTabs: TabInfo[] = [
    { label: "2025-02-07_StageCrew_DSG営業", mark: icon(12, fav.slides, "0 0 16 16"), ruled: true, faded: true },
    { label: "AI連携デモ - Pitwall public video", mark: icon(11, fav.globe, "0 0 16 16"), ruled: true, faded: true },
    { label: "Tocaro v3 - Overview | Datadog", mark: icon(12, fav.datadog, "0 0 16 16"), ruled: true },
    { label: "トヨタ自動車WEBサイト", mark: icon(12, fav.toyota, "0 0 16 16"), ruled: true },
    { label: "Service health - Feb 06, 202", mark: icon(12, fav.cube, "0 0 16 16"), rec: true },
    { label: "app.pitwall-web.jp", mark: icon(9, sMark, "0 0 16 16"), active: true },
  ];

  private clock(s: number) {
    return `${String(Math.floor(s / 60)).padStart(2, "0")}:${String(s % 60).padStart(2, "0")}`;
  }

  render() {
    const tools: [string, SVGTemplateResult, number][] = [
      ["Rectangle", g.rect, 15], ["Filled rectangle", g.rectFill, 15], ["Ellipse", g.circle, 16],
      ["Filled ellipse", g.circleFill, 16], ["Arrow", g.arrow, 14], ["Callout", g.comment, 16],
    ];
    return html`
      <browser-chrome .tabs=${this.outerTabs} url="app.pitwall-web.jp/asset-notes/?id=AIWrktQZRPL3uDmmjMO3#"></browser-chrome>
      <div class="work">
        <div class="main">
          <span class="ring"></span>
          <div class="video">
            <div class="draw">
              <button class="on" aria-label="Select">${icon(17, g.pointer)}</button>
              <button aria-label="Delete">${icon(15, g.trashSolid)}</button>
              <div class="shapes">
                ${tools.map(([name, art, size]) => html`<button aria-label=${name}>${icon(size, art)}</button>`)}
                <button class="letter" aria-label="Text">A</button>
              </div>
              <button aria-label="Close">${icon(13, svg`<path d="M4 3l16 18M20 3L4 21" stroke-width="5"/>`)}</button>
            </div>
            <browser-chrome compact .tabs=${this.innerTabs} url="app.pitwall-web.jp"></browser-chrome>
            <sign-in-page></sign-in-page>
            <task-bar></task-bar>
          </div>
          <div class="player">
            <input type="range" aria-label="Position" min="0" max=${this.duration} .value=${String(this.position)}
              @input=${(e: Event) => (this.position = Number((e.target as HTMLInputElement).value))} />
            <div class="times"><span>${this.clock(this.position)}</span><span>${this.clock(this.duration)}</span></div>
            <button class="next" aria-label="Next">${icon(13, g.chevronRight, "0 0 24 24", 15)}</button>
            <button class="pause" aria-label="Pause"></button>
            <span class="frame"></span>
            <button class="lang" aria-label="Language"><b>A</b><i>A</i></button>
            <button class="help" aria-label="Open chat">${icon(20, g.bubble)}</button>
          </div>
        </div>
        <asset-panel></asset-panel>
      </div>
    `;
  }
}
